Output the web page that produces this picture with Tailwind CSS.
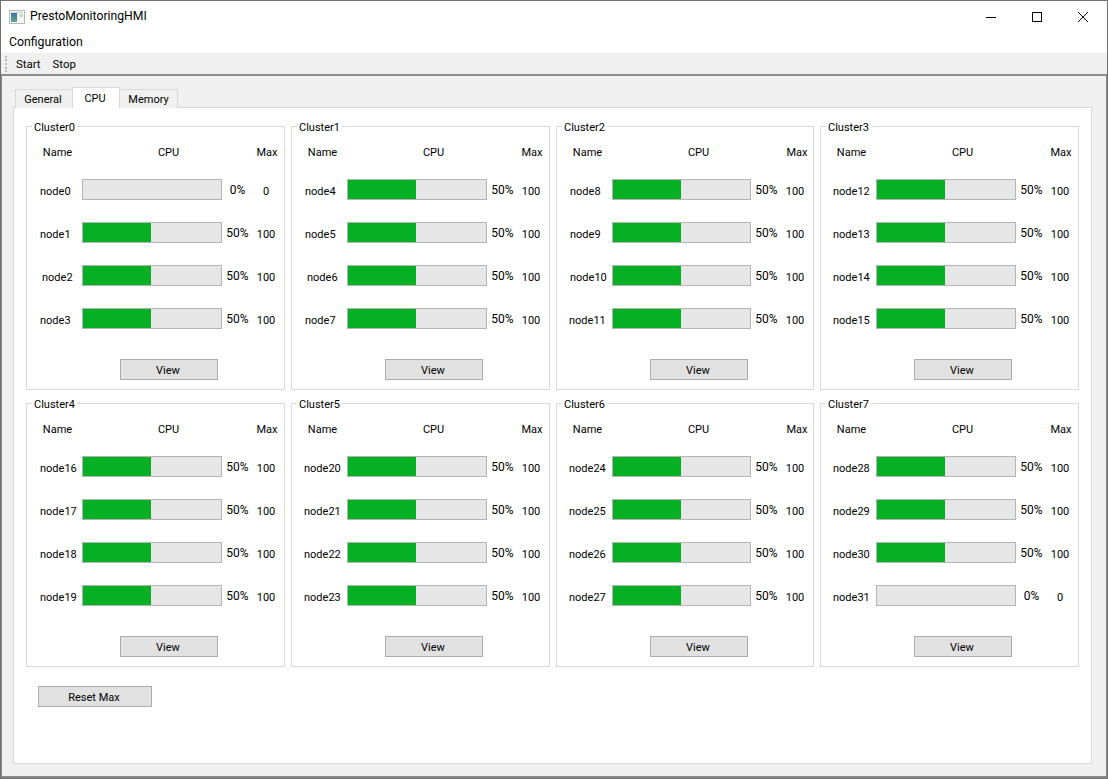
<!DOCTYPE html>
<html><head><meta charset="utf-8"><script src="https://cdn.jsdelivr.net/npm/@tailwindcss/browser@4"></script></head>
<body class="w-[1108px] h-[779px] overflow-hidden bg-white text-black font-['Roboto',sans-serif] text-[11px] leading-[16px]">
<div class="w-[1108px] h-[779px] border border-[#6f6f6f] flex flex-col bg-white">
  <div class="h-[31px] flex items-center shrink-0">
    <svg class="ml-[8px] w-[16px] h-[14px]" viewBox="0 0 16 14"><defs><linearGradient id="g" x1="0" y1="0" x2="0" y2="1"><stop offset="0" stop-color="#3f74a8"/><stop offset="1" stop-color="#5fa884"/></linearGradient></defs><rect x=".5" y=".5" width="15" height="13" fill="#f4f4f4" stroke="#b8b8b8"/><rect x="2" y="2" width="12" height="1" fill="#d0d0d0"/><rect x="2" y="3" width="6" height="9" fill="url(#g)"/><rect x="11" y="4" width="3" height="3" fill="#bfe0c0"/></svg>
    <span class="ml-[5px] text-[12.2px] pb-[2px]">PrestoMonitoringHMI</span>
    <div class="ml-auto flex h-full items-center pr-[1px]">
      <svg class="w-[46px] h-[30px]" viewBox="0 0 46 30"><path d="M18 15.5h10" stroke="#000" fill="none"/></svg>
      <svg class="w-[46px] h-[30px]" viewBox="0 0 46 30"><rect x="18.5" y="10.5" width="9" height="9" stroke="#000" fill="none"/></svg>
      <svg class="w-[46px] h-[30px]" viewBox="0 0 46 30"><path d="M18 10l10 10M28 10l-10 10" stroke="#000" fill="none"/></svg>
    </div>
  </div>
  <div class="h-[20px] pl-[8px] flex items-center shrink-0 text-[12.3px]">Configuration</div>
  <div class="h-[22px] bg-[#f0f0f0] border-t border-[#f8f8f8] flex items-center shrink-0 text-[11.4px]">
    <div class="ml-[4px] w-[2px] h-[16px] border-l-2 border-dotted border-[#b8b8b8]"></div>
    <span class="ml-[9px]">Start</span><span class="ml-[12px]">Stop</span>
  </div>
  <div class="flex-1 bg-[#f0f0f0] border-t-2 border-l border-r border-b-2 border-[#8a8a8a] pl-[11px] pt-[11px]">
    <div class="flex items-end h-[21px] pl-[2px] relative z-10">
      <div class="h-[19px] w-[58px] pr-[2px] bg-[#f0f0f0] border border-b-0 border-[#d9d9d9] text-center leading-[20px]">General</div>
      <div class="h-[21px] w-[48px] -ml-[1px] pr-[2px] bg-white border border-b-0 border-[#d9d9d9] text-center leading-[22px]">CPU</div>
      <div class="h-[19px] w-[59px] -ml-[1px] bg-[#f0f0f0] border border-b-0 border-[#d9d9d9] text-center leading-[20px]">Memory</div>
    </div>
    <div class="w-[1079px] h-[657px] -mt-[1px] bg-white border border-[#d9d9d9] pl-[12px] pt-[18px]">
      <div class="grid grid-cols-[259px_259px_258px_259px] gap-x-[6px] gap-y-[13px]">

        <div class="relative h-[264px] border border-[#d9d9d9] pt-[16px]">
          <div class="absolute left-[5px] -top-[7px] bg-white px-[2px]">Cluster0</div>
          <div class="grid grid-cols-[61px_161px_36px] h-[20px] items-center text-center"><span>Name</span><span>CPU</span><span>Max</span></div>
          <div class="grid grid-cols-[55px_140px_30px_28px] gap-y-[22px] mt-[16px] items-center text-center [&>span]:pt-[4px]">
            <span class="text-left pl-[13px]">node0</span><div class="h-[21px] border border-[#b4b4b4] bg-[#e6e6e6]"></div><span class="text-[12px] pt-0! pl-[1px]">0%</span><span>0</span>
            <span class="text-left pl-[13px]">node1</span><div class="h-[21px] border border-[#b4b4b4] bg-[#e6e6e6]"><div class="h-full w-[68px] bg-[#06b025]"></div></div><span class="text-[12px] pt-0! pl-[1px]">50%</span><span>100</span>
            <span class="text-left pl-[15px]">node2</span><div class="h-[21px] border border-[#b4b4b4] bg-[#e6e6e6]"><div class="h-full w-[68px] bg-[#06b025]"></div></div><span class="text-[12px] pt-0! pl-[1px]">50%</span><span>100</span>
            <span class="text-left pl-[13px]">node3</span><div class="h-[21px] border border-[#b4b4b4] bg-[#e6e6e6]"><div class="h-full w-[68px] bg-[#06b025]"></div></div><span class="text-[12px] pt-0! pl-[1px]">50%</span><span>100</span>
          </div>
          <button class="block ml-[93px] mt-[30px] w-[98px] h-[21px] pt-[3px] pr-[2px] bg-[#e1e1e1] border border-[#adadad]">View</button>
        </div>

        <div class="relative h-[264px] border border-[#d9d9d9] pt-[16px]">
          <div class="absolute left-[5px] -top-[7px] bg-white px-[2px]">Cluster1</div>
          <div class="grid grid-cols-[61px_161px_36px] h-[20px] items-center text-center"><span>Name</span><span>CPU</span><span>Max</span></div>
          <div class="grid grid-cols-[55px_140px_30px_28px] gap-y-[22px] mt-[16px] items-center text-center [&>span]:pt-[4px]">
            <span class="text-left pl-[13px]">node4</span><div class="h-[21px] border border-[#b4b4b4] bg-[#e6e6e6]"><div class="h-full w-[68px] bg-[#06b025]"></div></div><span class="text-[12px] pt-0! pl-[1px]">50%</span><span>100</span>
            <span class="text-left pl-[13px]">node5</span><div class="h-[21px] border border-[#b4b4b4] bg-[#e6e6e6]"><div class="h-full w-[68px] bg-[#06b025]"></div></div><span class="text-[12px] pt-0! pl-[1px]">50%</span><span>100</span>
            <span class="text-left pl-[15px]">node6</span><div class="h-[21px] border border-[#b4b4b4] bg-[#e6e6e6]"><div class="h-full w-[68px] bg-[#06b025]"></div></div><span class="text-[12px] pt-0! pl-[1px]">50%</span><span>100</span>
            <span class="text-left pl-[13px]">node7</span><div class="h-[21px] border border-[#b4b4b4] bg-[#e6e6e6]"><div class="h-full w-[68px] bg-[#06b025]"></div></div><span class="text-[12px] pt-0! pl-[1px]">50%</span><span>100</span>
          </div>
          <button class="block ml-[93px] mt-[30px] w-[98px] h-[21px] pt-[3px] pr-[2px] bg-[#e1e1e1] border border-[#adadad]">View</button>
        </div>

        <div class="relative h-[264px] border border-[#d9d9d9] pt-[16px]">
          <div class="absolute left-[5px] -top-[7px] bg-white px-[2px]">Cluster2</div>
          <div class="grid grid-cols-[61px_161px_36px] h-[20px] items-center text-center"><span>Name</span><span>CPU</span><span>Max</span></div>
          <div class="grid grid-cols-[55px_139px_30px_28px] gap-y-[22px] mt-[16px] items-center text-center [&>span]:pt-[4px]">
            <span class="text-left pl-[13px]">node8</span><div class="h-[21px] border border-[#b4b4b4] bg-[#e6e6e6]"><div class="h-full w-[68px] bg-[#06b025]"></div></div><span class="text-[12px] pt-0! pl-[1px]">50%</span><span>100</span>
            <span class="text-left pl-[13px]">node9</span><div class="h-[21px] border border-[#b4b4b4] bg-[#e6e6e6]"><div class="h-full w-[68px] bg-[#06b025]"></div></div><span class="text-[12px] pt-0! pl-[1px]">50%</span><span>100</span>
            <span class="text-left pl-[13px]">node10</span><div class="h-[21px] border border-[#b4b4b4] bg-[#e6e6e6]"><div class="h-full w-[68px] bg-[#06b025]"></div></div><span class="text-[12px] pt-0! pl-[1px]">50%</span><span>100</span>
            <span class="text-left pl-[12px]">node11</span><div class="h-[21px] border border-[#b4b4b4] bg-[#e6e6e6]"><div class="h-full w-[68px] bg-[#06b025]"></div></div><span class="text-[12px] pt-0! pl-[1px]">50%</span><span>100</span>
          </div>
          <button class="block ml-[93px] mt-[30px] w-[98px] h-[21px] pt-[3px] pr-[2px] bg-[#e1e1e1] border border-[#adadad]">View</button>
        </div>

        <div class="relative h-[264px] border border-[#d9d9d9] pt-[16px]">
          <div class="absolute left-[5px] -top-[7px] bg-white px-[2px]">Cluster3</div>
          <div class="grid grid-cols-[61px_161px_36px] h-[20px] items-center text-center"><span>Name</span><span>CPU</span><span>Max</span></div>
          <div class="grid grid-cols-[55px_140px_30px_28px] gap-y-[22px] mt-[16px] items-center text-center [&>span]:pt-[4px]">
            <span class="text-left pl-[12px]">node12</span><div class="h-[21px] border border-[#b4b4b4] bg-[#e6e6e6]"><div class="h-full w-[68px] bg-[#06b025]"></div></div><span class="text-[12px] pt-0! pl-[1px]">50%</span><span>100</span>
            <span class="text-left pl-[12px]">node13</span><div class="h-[21px] border border-[#b4b4b4] bg-[#e6e6e6]"><div class="h-full w-[68px] bg-[#06b025]"></div></div><span class="text-[12px] pt-0! pl-[1px]">50%</span><span>100</span>
            <span class="text-left pl-[12px]">node14</span><div class="h-[21px] border border-[#b4b4b4] bg-[#e6e6e6]"><div class="h-full w-[68px] bg-[#06b025]"></div></div><span class="text-[12px] pt-0! pl-[1px]">50%</span><span>100</span>
            <span class="text-left pl-[12px]">node15</span><div class="h-[21px] border border-[#b4b4b4] bg-[#e6e6e6]"><div class="h-full w-[68px] bg-[#06b025]"></div></div><span class="text-[12px] pt-0! pl-[1px]">50%</span><span>100</span>
          </div>
          <button class="block ml-[93px] mt-[30px] w-[98px] h-[21px] pt-[3px] pr-[2px] bg-[#e1e1e1] border border-[#adadad]">View</button>
        </div>

        <div class="relative h-[264px] border border-[#d9d9d9] pt-[16px]">
          <div class="absolute left-[5px] -top-[7px] bg-white px-[2px]">Cluster4</div>
          <div class="grid grid-cols-[61px_161px_36px] h-[20px] items-center text-center"><span>Name</span><span>CPU</span><span>Max</span></div>
          <div class="grid grid-cols-[55px_140px_30px_28px] gap-y-[22px] mt-[16px] items-center text-center [&>span]:pt-[4px]">
            <span class="text-left pl-[13px]">node16</span><div class="h-[21px] border border-[#b4b4b4] bg-[#e6e6e6]"><div class="h-full w-[68px] bg-[#06b025]"></div></div><span class="text-[12px] pt-0! pl-[1px]">50%</span><span>100</span>
            <span class="text-left pl-[13px]">node17</span><div class="h-[21px] border border-[#b4b4b4] bg-[#e6e6e6]"><div class="h-full w-[68px] bg-[#06b025]"></div></div><span class="text-[12px] pt-0! pl-[1px]">50%</span><span>100</span>
            <span class="text-left pl-[13px]">node18</span><div class="h-[21px] border border-[#b4b4b4] bg-[#e6e6e6]"><div class="h-full w-[68px] bg-[#06b025]"></div></div><span class="text-[12px] pt-0! pl-[1px]">50%</span><span>100</span>
            <span class="text-left pl-[13px]">node19</span><div class="h-[21px] border border-[#b4b4b4] bg-[#e6e6e6]"><div class="h-full w-[68px] bg-[#06b025]"></div></div><span class="text-[12px] pt-0! pl-[1px]">50%</span><span>100</span>
          </div>
          <button class="block ml-[93px] mt-[30px] w-[98px] h-[21px] pt-[3px] pr-[2px] bg-[#e1e1e1] border border-[#adadad]">View</button>
        </div>

        <div class="relative h-[264px] border border-[#d9d9d9] pt-[16px]">
          <div class="absolute left-[5px] -top-[7px] bg-white px-[2px]">Cluster5</div>
          <div class="grid grid-cols-[61px_161px_36px] h-[20px] items-center text-center"><span>Name</span><span>CPU</span><span>Max</span></div>
          <div class="grid grid-cols-[55px_140px_30px_28px] gap-y-[22px] mt-[16px] items-center text-center [&>span]:pt-[4px]">
            <span class="text-left pl-[12px]">node20</span><div class="h-[21px] border border-[#b4b4b4] bg-[#e6e6e6]"><div class="h-full w-[68px] bg-[#06b025]"></div></div><span class="text-[12px] pt-0! pl-[1px]">50%</span><span>100</span>
            <span class="text-left pl-[12px]">node21</span><div class="h-[21px] border border-[#b4b4b4] bg-[#e6e6e6]"><div class="h-full w-[68px] bg-[#06b025]"></div></div><span class="text-[12px] pt-0! pl-[1px]">50%</span><span>100</span>
            <span class="text-left pl-[12px]">node22</span><div class="h-[21px] border border-[#b4b4b4] bg-[#e6e6e6]"><div class="h-full w-[68px] bg-[#06b025]"></div></div><span class="text-[12px] pt-0! pl-[1px]">50%</span><span>100</span>
            <span class="text-left pl-[12px]">node23</span><div class="h-[21px] border border-[#b4b4b4] bg-[#e6e6e6]"><div class="h-full w-[68px] bg-[#06b025]"></div></div><span class="text-[12px] pt-0! pl-[1px]">50%</span><span>100</span>
          </div>
          <button class="block ml-[93px] mt-[30px] w-[98px] h-[21px] pt-[3px] pr-[2px] bg-[#e1e1e1] border border-[#adadad]">View</button>
        </div>

        <div class="relative h-[264px] border border-[#d9d9d9] pt-[16px]">
          <div class="absolute left-[5px] -top-[7px] bg-white px-[2px]">Cluster6</div>
          <div class="grid grid-cols-[61px_161px_36px] h-[20px] items-center text-center"><span>Name</span><span>CPU</span><span>Max</span></div>
          <div class="grid grid-cols-[55px_139px_30px_28px] gap-y-[22px] mt-[16px] items-center text-center [&>span]:pt-[4px]">
            <span class="text-left pl-[12px]">node24</span><div class="h-[21px] border border-[#b4b4b4] bg-[#e6e6e6]"><div class="h-full w-[68px] bg-[#06b025]"></div></div><span class="text-[12px] pt-0! pl-[1px]">50%</span><span>100</span>
            <span class="text-left pl-[12px]">node25</span><div class="h-[21px] border border-[#b4b4b4] bg-[#e6e6e6]"><div class="h-full w-[68px] bg-[#06b025]"></div></div><span class="text-[12px] pt-0! pl-[1px]">50%</span><span>100</span>
            <span class="text-left pl-[12px]">node26</span><div class="h-[21px] border border-[#b4b4b4] bg-[#e6e6e6]"><div class="h-full w-[68px] bg-[#06b025]"></div></div><span class="text-[12px] pt-0! pl-[1px]">50%</span><span>100</span>
            <span class="text-left pl-[12px]">node27</span><div class="h-[21px] border border-[#b4b4b4] bg-[#e6e6e6]"><div class="h-full w-[68px] bg-[#06b025]"></div></div><span class="text-[12px] pt-0! pl-[1px]">50%</span><span>100</span>
          </div>
          <button class="block ml-[93px] mt-[30px] w-[98px] h-[21px] pt-[3px] pr-[2px] bg-[#e1e1e1] border border-[#adadad]">View</button>
        </div>

        <div class="relative h-[264px] border border-[#d9d9d9] pt-[16px]">
          <div class="absolute left-[5px] -top-[7px] bg-white px-[2px]">Cluster7</div>
          <div class="grid grid-cols-[61px_161px_36px] h-[20px] items-center text-center"><span>Name</span><span>CPU</span><span>Max</span></div>
          <div class="grid grid-cols-[55px_140px_30px_28px] gap-y-[22px] mt-[16px] items-center text-center [&>span]:pt-[4px]">
            <span class="text-left pl-[12px]">node28</span><div class="h-[21px] border border-[#b4b4b4] bg-[#e6e6e6]"><div class="h-full w-[68px] bg-[#06b025]"></div></div><span class="text-[12px] pt-0! pl-[1px]">50%</span><span>100</span>
            <span class="text-left pl-[12px]">node29</span><div class="h-[21px] border border-[#b4b4b4] bg-[#e6e6e6]"><div class="h-full w-[68px] bg-[#06b025]"></div></div><span class="text-[12px] pt-0! pl-[1px]">50%</span><span>100</span>
            <span class="text-left pl-[12px]">node30</span><div class="h-[21px] border border-[#b4b4b4] bg-[#e6e6e6]"><div class="h-full w-[68px] bg-[#06b025]"></div></div><span class="text-[12px] pt-0! pl-[1px]">50%</span><span>100</span>
            <span class="text-left pl-[12px]">node31</span><div class="h-[21px] border border-[#b4b4b4] bg-[#e6e6e6]"></div><span class="text-[12px] pt-0! pl-[1px]">0%</span><span>0</span>
          </div>
          <button class="block ml-[93px] mt-[30px] w-[98px] h-[21px] pt-[3px] pr-[2px] bg-[#e1e1e1] border border-[#adadad]">View</button>
        </div>
      </div>
      <button class="block ml-[12px] mt-[19px] w-[114px] h-[21px] pt-[3px] pr-[2px] bg-[#e1e1e1] border border-[#adadad]">Reset Max</button>
    </div>
  </div>
</div>
</body></html>
